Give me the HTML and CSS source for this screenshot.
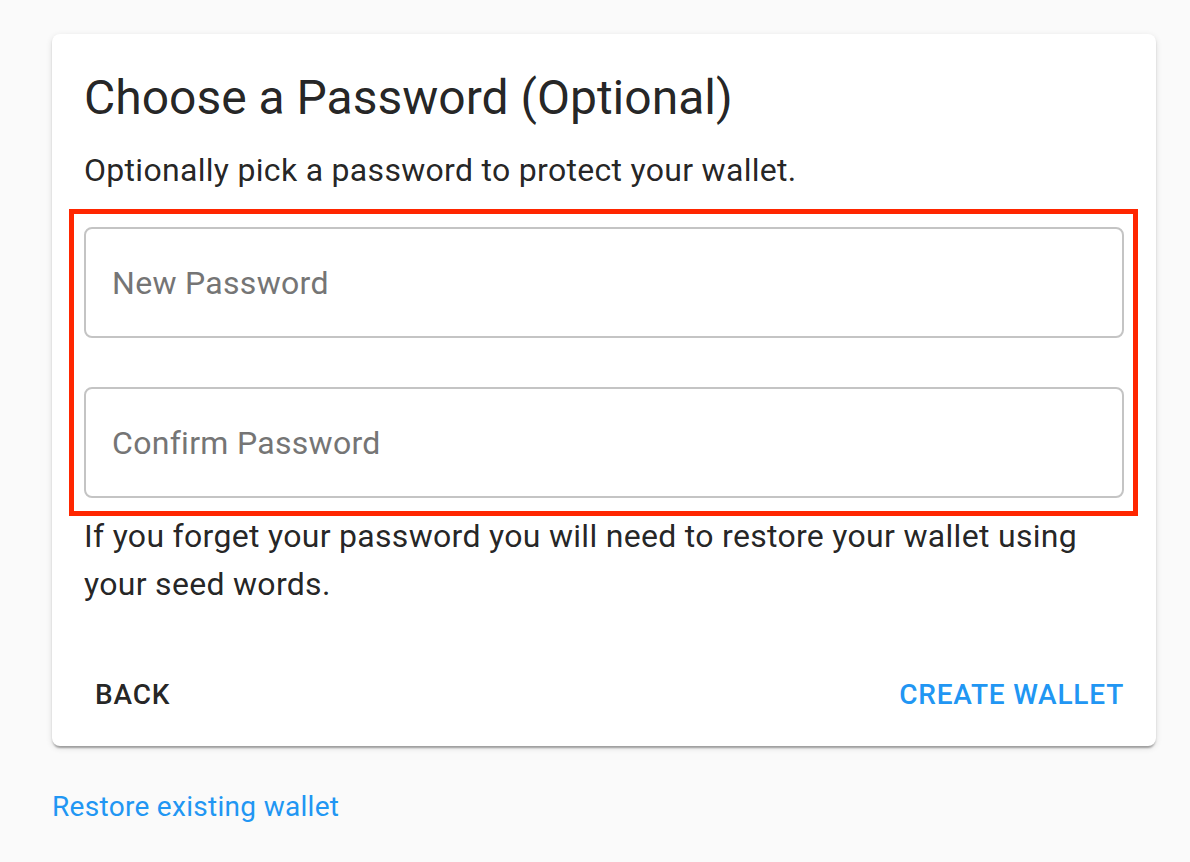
FILE: index.html
```html
<!DOCTYPE html>
<html lang="en">
<head>
    <meta charset="UTF-8">
    <meta name="viewport" content="width=device-width, initial-scale=1.0">
    <title>Create Wallet</title>
    <link rel="stylesheet" href="styles.css">
</head>
<body>
    <div class="page">
        <div class="card">
            <div class="card-content">
                <h1 class="card-title">Choose a Password (Optional)</h1>
                <p class="card-text">Optionally pick a password to protect your wallet.</p>

                <div class="field-group">
                    <div class="field">
                        <input class="field-input" type="password" placeholder="New Password">
                    </div>
                    <div class="field">
                        <input class="field-input" type="password" placeholder="Confirm Password">
                    </div>
                </div>

                <p class="card-text hint">If you forget your password you will need to restore your wallet using your seed words.</p>
            </div>

            <div class="card-actions">
                <button class="btn btn-back">Back</button>
                <button class="btn btn-primary">Create Wallet</button>
            </div>
        </div>

        <a class="restore-link" href="#">Restore existing wallet</a>
    </div>
</body>
</html>
```

FILE: styles.css
```css
* {
    margin: 0;
    padding: 0;
    box-sizing: border-box;
}

body {
    background: #fafafa;
    font-family: Roboto, 'Noto Sans', sans-serif;
    color: rgba(0,0,0,0.87);
}

.page {
    padding: 34px 34px 0 52px;
}

.card {
    background: white;
    border-radius: 8px;
    box-shadow:
        0 4px 2px -2px rgba(0,0,0,0.2),
        0 2px 2px rgba(0,0,0,0.14),
        0 2px 6px rgba(0,0,0,0.12);
}

.card-content {
    padding: 32px 32px 0;
}

.card-title {
    font-size: 48px;
    font-weight: 400;
    line-height: 64px;
}

.card-text {
    font-size: 32px;
    line-height: 48px;
    letter-spacing: 0.3px;
    margin-top: 16px;
}

.field-group {
    position: relative;
    margin-top: 33px;
    display: flex;
    flex-direction: column;
    gap: 49px;
}

/* red highlight frame round the inputs */
.field-group::before {
    content: '';
    position: absolute;
    top: -18px;
    left: -15px;
    right: -14px;
    bottom: -18px;
    border: 5px solid #ff2600;
    pointer-events: none;
}

.field {
    height: 111px;
    border: 2px solid #c4c4c4;
    border-radius: 8px;
    display: flex;
    align-items: center;
}

.field-input {
    width: 100%;
    border: none;
    outline: none;
    background: transparent;
    padding: 0 26px;
    font-family: Roboto, sans-serif;
    font-size: 32px;
    letter-spacing: 0.3px;
    color: rgba(0,0,0,0.87);
}

.field-input::placeholder {
    color: #757575;
    opacity: 1;
}

.hint {
    margin-top: 14px;
}

.card-actions {
    display: flex;
    justify-content: space-between;
    align-items: center;
    padding: 58px 16px 23px;
}

.btn {
    background: none;
    border: none;
    font-family: Roboto, sans-serif;
    font-size: 28px;
    font-weight: 500;
    letter-spacing: 0.8px;
    text-transform: uppercase;
    padding: 12px 16px;
    cursor: pointer;
}

.btn-back {
    color: rgba(0,0,0,0.87);
    padding-left: 27px;
}

.btn-primary {
    color: #2196f3;
}

.restore-link {
    display: inline-block;
    margin-top: 44px;
    font-size: 28px;
    letter-spacing: 0.3px;
    color: #2196f3;
    text-decoration: none;
}
```
